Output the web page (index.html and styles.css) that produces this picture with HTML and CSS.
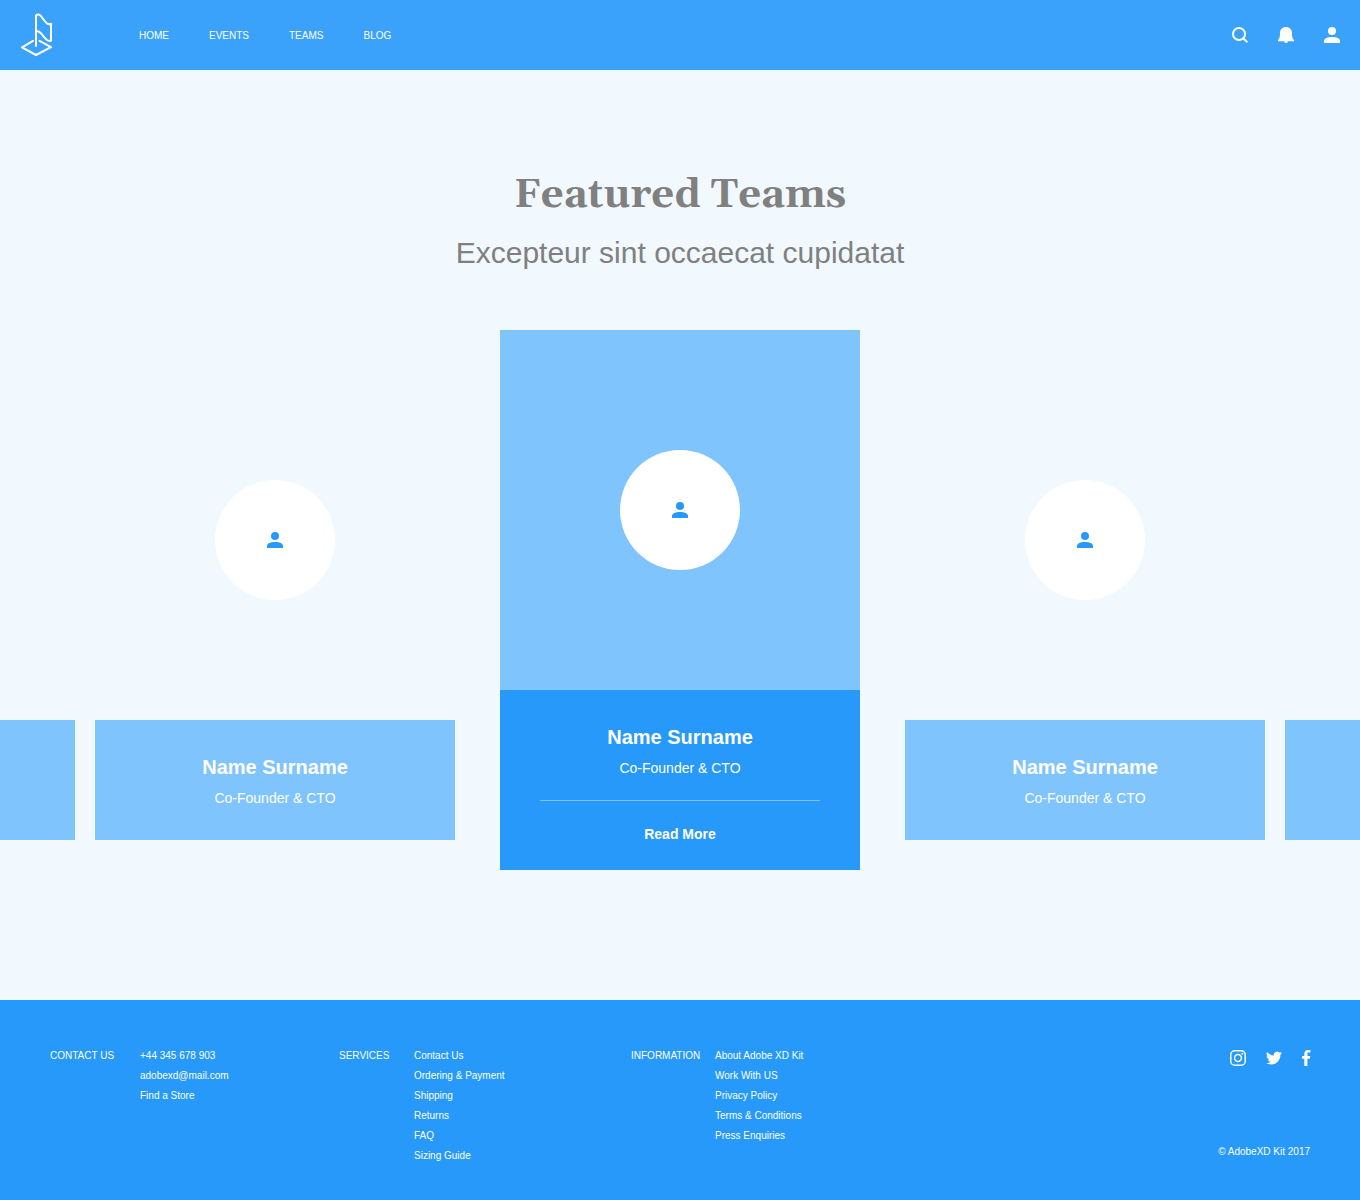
FILE: index.html
```html
<!DOCTYPE html>
<html lang="en">
<head>
<meta charset="utf-8">
<meta name="viewport" content="width=device-width, initial-scale=1">
<title>Featured Teams</title>
<link rel="stylesheet" href="styles.css">
</head>
<body>
<svg class="sprite" aria-hidden="true">
  <symbol id="user" viewBox="0 0 16 16"><circle cx="8" cy="4" r="4"/><path d="M0 16v-2c0-2.700 3.600-4 8-4s8 1.300 8 4v2z"/></symbol>
</svg>
<header class="topbar">
  <a class="logo" href="#" aria-label="Home page">
    <svg viewBox="0 0 34 44" width="34" height="44"><path d="M13 27.800 2 34.300 16 42 31 34.200 19.500 27.800M16 33V2.500C17.500 1 19.500 1.300 21 3.200L25.500 9C27 11 28.500 11.800 31 10.700V27.700C28.500 28.600 27 27.600 25.200 25.400L21 20.300C19.500 18.600 18 18 16 18.500"/></svg>
  </a>
  <nav class="menu" aria-label="Main">
    <a href="#">HOME</a>
    <a href="#">EVENTS</a>
    <a href="#">TEAMS</a>
    <a href="#">BLOG</a>
  </nav>
  <div class="tools">
    <button type="button" aria-label="Search"><svg class="icon" viewBox="0 0 16 16"><path class="line" d="M11.500 11.500 15.400 15.400"/><circle class="line" cx="7" cy="7" r="6"/></svg></button>
    <button type="button" aria-label="Notifications"><svg class="icon" viewBox="0 0 16 16"><path d="M8 0c3.800 0 6 2.500 6 6 0 3.500.300 5.500 2 7v1.200H10A2 1.800 0 0 1 6 14.200H0V13c1.700-1.500 2-3.500 2-7 0-3.500 2.200-6 6-6z"/></svg></button>
    <button type="button" aria-label="Account"><svg class="icon"><use href="#user"/></svg></button>
  </div>
</header>
<main class="teams">
  <h1>Featured Teams</h1>
  <p class="subtitle">Excepteur sint occaecat cupidatat</p>
  <div class="carousel">
    <div class="peek"></div>
    <article class="card">
      <div class="photo"><span class="avatar"><svg class="icon"><use href="#user"/></svg></span></div>
      <div class="info">
        <h2>Name Surname</h2>
        <p>Co-Founder &amp; CTO</p>
      </div>
    </article>
    <article class="card featured">
      <div class="photo"><span class="avatar"><svg class="icon"><use href="#user"/></svg></span></div>
      <div class="info">
        <h2>Name Surname</h2>
        <p>Co-Founder &amp; CTO</p>
        <hr>
        <a class="more" href="#">Read More</a>
      </div>
    </article>
    <article class="card">
      <div class="photo"><span class="avatar"><svg class="icon"><use href="#user"/></svg></span></div>
      <div class="info">
        <h2>Name Surname</h2>
        <p>Co-Founder &amp; CTO</p>
      </div>
    </article>
    <div class="peek"></div>
  </div>
</main>
<footer class="footer">
  <section class="group contact">
    <h3>CONTACT US</h3>
    <ul>
      <li><a href="#">+44 345 678 903</a></li>
      <li><a href="#">adobexd@mail.com</a></li>
      <li><a href="#">Find a Store</a></li>
    </ul>
  </section>
  <section class="group services">
    <h3>SERVICES</h3>
    <ul>
      <li><a href="#">Contact Us</a></li>
      <li><a href="#">Ordering &amp; Payment</a></li>
      <li><a href="#">Shipping</a></li>
      <li><a href="#">Returns</a></li>
      <li><a href="#">FAQ</a></li>
      <li><a href="#">Sizing Guide</a></li>
    </ul>
  </section>
  <section class="group information">
    <h3>INFORMATION</h3>
    <ul>
      <li><a href="#">About Adobe XD Kit</a></li>
      <li><a href="#">Work With US</a></li>
      <li><a href="#">Privacy Policy</a></li>
      <li><a href="#">Terms &amp; Conditions</a></li>
      <li><a href="#">Press Enquiries</a></li>
    </ul>
  </section>
  <div class="closing">
    <div class="social">
      <a href="#" aria-label="Instagram"><svg class="icon" viewBox="0 0 16 16"><rect class="line thin" x=".750" y=".750" width="14.500" height="14.500" rx="4"/><circle class="line thin" cx="8" cy="8" r="3.400"/><circle cx="12.300" cy="3.700" r="1"/></svg></a>
      <a href="#" aria-label="Twitter"><svg class="icon" viewBox="0 0 24 24"><path d="M23.950 4.570a10 10 0 0 1-2.820.770 4.960 4.960 0 0 0 2.160-2.720c-.950.550-2 .950-3.130 1.180a4.920 4.920 0 0 0-8.380 4.480A13.980 13.980 0 0 1 1.640 3.160a4.920 4.920 0 0 0 1.520 6.570 4.900 4.900 0 0 1-2.230-.610v.060a4.920 4.920 0 0 0 3.950 4.830 4.990 4.990 0 0 1-2.210.080 4.940 4.940 0 0 0 4.600 3.420A9.870 9.870 0 0 1 0 19.540a14 14 0 0 0 7.550 2.210c9.050 0 14-7.500 14-13.980 0-.210 0-.420-.020-.630a9.940 9.940 0 0 0 2.460-2.550z"/></svg></a>
      <a href="#" aria-label="Facebook"><svg class="icon narrow" viewBox="0 0 8 16"><path d="M2.300 16V8.700H0V6h2.300V3.900C2.300 1.400 3.700 0 6 0h2.400v2.600H6.800C5.700 2.600 5.400 3.100 5.400 4v2h2.900l-.400 2.700H5.400V16z"/></svg></a>
    </div>
    <p>© AdobeXD Kit 2017</p>
  </div>
</footer>
</body>
</html>
```
FILE: styles.css
```css
* {
  box-sizing: border-box;
  margin: 0;
  padding: 0;
}

body {
  display: flex;
  flex-direction: column;
  min-height: 100vh;
  background: #f1f9ff;
  color: #fff;
  font-family: "Liberation Sans", Arial, sans-serif;
  font-size: 10px;
  line-height: 20px;
}

a {
  color: inherit;
  text-decoration: none;
}

ul {
  list-style: none;
}

button {
  border: 0;
  background: none;
  color: inherit;
  cursor: pointer;
}

.sprite {
  display: none;
}

.icon {
  display: block;
  width: 16px;
  height: 16px;
  fill: currentColor;
  overflow: visible;
}

.icon.narrow {
  width: 8px;
}

.line {
  fill: none;
  stroke: currentColor;
  stroke-width: 2;
}

.thin {
  stroke-width: 1.5;
}

/* Top bar */
.topbar {
  display: flex;
  align-items: center;
  height: 70px;
  padding: 0 20px;
  background: #3ba2fb;
}

.logo svg {
  display: block;
  fill: none;
  stroke: #fff;
  stroke-width: 2;
  stroke-linejoin: round;
  stroke-linecap: round;
}

.menu {
  display: flex;
  gap: 40px;
  margin-left: 85px;
  padding-top: 2px;
}

.tools {
  display: flex;
  gap: 30px;
  margin-left: auto;
}

/* Teams */
.teams {
  flex: 1;
  padding: 101px 0 130px;
  text-align: center;
}

h1 {
  color: gray;
  font-family: Georgia, Gelasio, "Liberation Serif", serif;
  font-size: 40px;
  line-height: 50px;
}

.subtitle {
  margin-top: 12px;
  color: gray;
  font-size: 30px;
  line-height: 40px;
}

.carousel {
  display: flex;
  align-items: center;
  gap: 20px;
  margin-top: 57px;
  overflow: hidden;
}

.peek {
  flex: 1;
  align-self: flex-end;
  height: 120px;
  margin-bottom: 30px;
  background: #7fc4fd;
}

.card {
  flex: 0 0 360px;
}

.photo {
  display: flex;
  align-items: center;
  justify-content: center;
  height: 360px;
}

.avatar {
  display: flex;
  align-items: center;
  justify-content: center;
  width: 120px;
  height: 120px;
  border-radius: 50%;
  background: #fff;
  color: #2699fb;
}

.info {
  min-height: 120px;
  padding: 32px 40px 26px;
  background: #7fc4fd;
  font-size: 14px;
}

.info h2 {
  margin-bottom: 6px;
  font-size: 20px;
  line-height: 30px;
}

.featured {
  margin: 0 25px;
}

.featured .photo {
  background: #7fc4fd;
}

.featured .info {
  background: #2699fb;
}

.info hr {
  height: 1px;
  margin: 22px 0 23px;
  border: 0;
  background: #7fc4fd;
}

.more {
  display: block;
  font-weight: bold;
}

/* Footer */
.footer {
  display: grid;
  grid-template-columns: 289px 292px 1fr auto;
  padding: 46px 50px 34px;
  background: #2699fb;
}

.group {
  display: flex;
}

.group h3 {
  font-size: 10px;
  font-weight: normal;
}

.contact h3 {
  width: 90px;
}

.services h3 {
  width: 75px;
}

.information h3 {
  width: 84px;
}

.closing {
  display: flex;
  flex-direction: column;
  align-items: flex-end;
  justify-content: space-between;
  padding: 4px 0;
}

.social {
  display: flex;
  gap: 20px;
}
```
